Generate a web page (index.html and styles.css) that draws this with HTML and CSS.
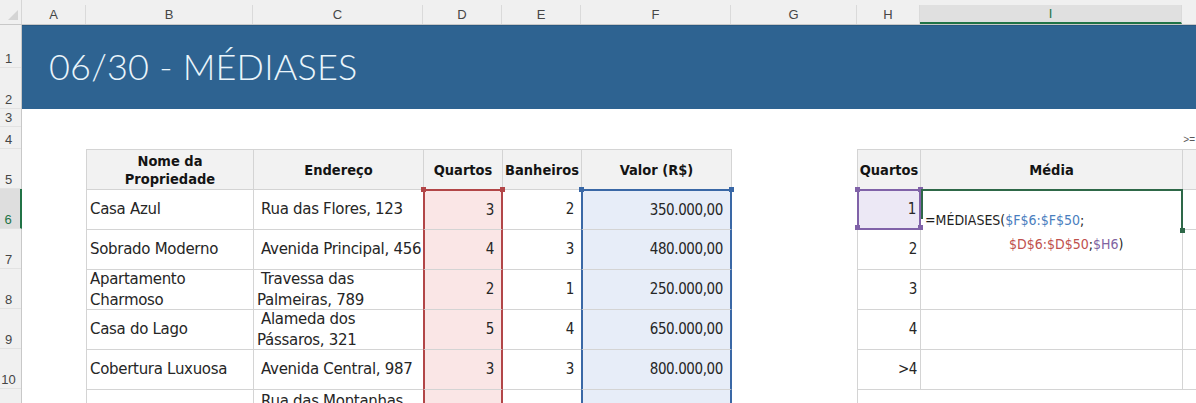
FILE: index.html
```html
<!DOCTYPE html>
<html lang="pt-BR">

<head>
  <meta charset="UTF-8">
  <meta name="viewport" content="width=device-width, initial-scale=1.0">
  <title>06/30 - MÉDIASES</title>
  <link rel="stylesheet" href="styles.css">
</head>

<body>
  <div class="sheet">
    <!-- column letters -->
    <div class="colBar">
      <div class="corner"><span class="cornerTri"></span></div>
      <div class="colHead">A</div>
      <div class="colHead">B</div>
      <div class="colHead">C</div>
      <div class="colHead">D</div>
      <div class="colHead">E</div>
      <div class="colHead">F</div>
      <div class="colHead">G</div>
      <div class="colHead">H</div>
      <div class="colHead colActive">I</div>
      <div class="colHead colLast"></div>
    </div>

    <div class="mainArea">
      <!-- row numbers -->
      <div class="rowBar">
        <div class="rowHead">1</div>
        <div class="rowHead">2</div>
        <div class="rowHead">3</div>
        <div class="rowHead">4</div>
        <div class="rowHead">5</div>
        <div class="rowHead rowActive">6</div>
        <div class="rowHead">7</div>
        <div class="rowHead">8</div>
        <div class="rowHead">9</div>
        <div class="rowHead">10</div>
        <div class="rowHead"></div>
      </div>

      <div class="canvas">
        <div class="banner">
          <h1 class="bannerTitle">06/30 - MÉDIASES</h1>
        </div>
        <div class="spacer"><span class="cutText">&gt;=</span></div>

        <div class="tables">
          <!-- B5:F11 -->
          <div class="grid props">
            <div class="cell head">Nome da<br>Propriedade</div>
            <div class="cell head">Endereço</div>
            <div class="cell head">Quartos</div>
            <div class="cell head">Banheiros</div>
            <div class="cell head">Valor (R$)</div>

            <div class="cell txt">Casa Azul</div>
            <div class="cell txt addr">Rua das Flores, 123</div>
            <div class="cell num selRed topSel">3</div>
            <div class="cell num">2</div>
            <div class="cell num selBlue topSel">350.000,00</div>

            <div class="cell txt">Sobrado Moderno</div>
            <div class="cell txt addr">Avenida Principal, 456</div>
            <div class="cell num selRed">4</div>
            <div class="cell num">3</div>
            <div class="cell num selBlue">480.000,00</div>

            <div class="cell txt">Apartamento<br>Charmoso</div>
            <div class="cell txt addr">Travessa das<br>Palmeiras, 789</div>
            <div class="cell num selRed">2</div>
            <div class="cell num">1</div>
            <div class="cell num selBlue">250.000,00</div>

            <div class="cell txt">Casa do Lago</div>
            <div class="cell txt addr">Alameda dos<br>Pássaros, 321</div>
            <div class="cell num selRed">5</div>
            <div class="cell num">4</div>
            <div class="cell num selBlue">650.000,00</div>

            <div class="cell txt">Cobertura Luxuosa</div>
            <div class="cell txt addr">Avenida Central, 987</div>
            <div class="cell num selRed">3</div>
            <div class="cell num">3</div>
            <div class="cell num selBlue">800.000,00</div>

            <div class="cell txt"></div>
            <div class="cell txt addr lastRow">Rua das Montanhas,</div>
            <div class="cell num selRed"></div>
            <div class="cell num"></div>
            <div class="cell num selBlue"></div>
          </div>

          <!-- H5:I10 -->
          <div class="grid lookup">
            <div class="cell head">Quartos</div>
            <div class="cell head">Média</div>
            <div class="cell head lastCol"></div>

            <div class="cell num selPurple">1</div>
            <div class="cell editing">
              <span class="formula">=MÉDIASES(<span class="refBlue">$F$6:$F$50</span>;<br><span class="line2"><span class="refRed">$D$6:$D$50</span>;<span class="refPurple">$H6</span>)</span></span>
            </div>
            <div class="cell lastCol"></div>

            <div class="cell num">2</div>
            <div class="cell"></div>
            <div class="cell lastCol"></div>

            <div class="cell num">3</div>
            <div class="cell"></div>
            <div class="cell lastCol"></div>

            <div class="cell num">4</div>
            <div class="cell"></div>
            <div class="cell lastCol"></div>

            <div class="cell num">&gt;4</div>
            <div class="cell"></div>
            <div class="cell lastCol"></div>
          </div>
        </div>
      </div>
    </div>
  </div>
</body>

</html>
```

FILE: styles.css
```css
html,
body {
  margin: 0;
  height: 403px;
  overflow: hidden;
  background-color: white;
}

body {
  font-family: "DejaVu Sans", sans-serif;
  font-size: 15px;
  color: rgb(38, 38, 38);
}

/* column letters */
.colBar {
  display: grid;
  grid-template-columns: 22px 64px 167px 170px 79px 79px 150px 126px 63px 262px 1fr;
  height: 25px;
  background-color: rgb(240, 240, 240);
  border-bottom: 1px solid rgb(200, 200, 200);
  box-sizing: border-box;
}

.corner {
  display: flex;
  align-items: flex-end;
  justify-content: flex-end;
  padding: 0 3px 4px 0;
  border-right: 1px solid rgb(214, 214, 214);
}

.cornerTri {
  width: 0;
  height: 0;
  border-left: 10px solid transparent;
  border-bottom: 10px solid rgb(212, 212, 212);
}

.colHead {
  display: flex;
  align-items: center;
  justify-content: center;
  margin-top: 5px;
  font-family: "Liberation Sans", Arial, sans-serif;
  font-size: 13px;
  color: rgb(70, 70, 70);
  border-right: 1px solid rgb(218, 218, 218);
}

.colActive {
  background-color: rgb(224, 224, 224);
  color: rgb(33, 115, 70);
  border-bottom: 2px solid rgb(33, 115, 70);
}

.colLast {
  border-right: none;
}

/* row numbers */
.mainArea {
  display: grid;
  grid-template-columns: 22px 1fr;
}

.rowBar {
  display: grid;
  grid-template-rows: 43px 41px 18px 22px repeat(7, 40px);
  background-color: rgb(240, 240, 240);
  border-right: 1px solid rgb(200, 200, 200);
}

.rowHead {
  display: flex;
  align-items: flex-end;
  justify-content: center;
  padding: 0 4px 1px 0;
  font-family: "Liberation Sans", Arial, sans-serif;
  font-size: 13px;
  color: rgb(70, 70, 70);
  border-bottom: 1px solid rgb(226, 226, 226);
}

.rowActive {
  background-color: rgb(222, 222, 222);
  color: rgb(33, 115, 70);
  border-right: 2px solid rgb(33, 115, 70);
  margin-right: -1px;
}

/* title band */
.banner {
  height: 84px;
  background-color: rgb(46, 99, 145);
  border-top: 1px solid rgb(40, 88, 130);
  box-sizing: border-box;
  display: flex;
  align-items: center;
  padding: 0 0 3px 27px;
}

.bannerTitle {
  margin: 0;
  font-family: Lato, sans-serif;
  font-weight: 300;
  font-size: 36px;
  letter-spacing: 0.2px;
  color: rgb(234, 245, 251);
}

.spacer {
  height: 40px;
  display: flex;
  justify-content: flex-end;
  align-items: flex-end;
}

.cutText {
  font-family: "Liberation Sans", Arial, sans-serif;
  font-size: 10px;
  color: rgb(90, 90, 90);
  margin: 0 1px 4px 0;
}

/* tables */
.tables {
  display: flex;
}

.grid {
  display: grid;
  grid-auto-rows: 40px;
  border-top: 1px solid rgb(212, 212, 212);
  border-left: 1px solid rgb(212, 212, 212);
}

.props {
  margin-left: 64px;
  grid-template-columns: 167px 170px 79px 79px 150px;
}

.lookup {
  margin-left: 125px;
  flex: 1;
  grid-template-columns: 63px 262px 1fr;
}

.cell {
  position: relative;
  display: flex;
  align-items: center;
  padding: 0 3px;
  border-right: 1px solid rgb(212, 212, 212);
  border-bottom: 1px solid rgb(212, 212, 212);
  white-space: nowrap;
  line-height: 21px;
}

.head {
  justify-content: center;
  text-align: center;
  background-color: rgb(242, 242, 242);
  font-family: "DejaVu Sans Condensed", "DejaVu Sans", sans-serif;
  font-stretch: condensed;
  font-weight: bold;
  font-size: 14.5px;
  line-height: 18px;
  color: rgb(20, 20, 20);
}

.txt {
  overflow: hidden;
  letter-spacing: -0.3px;
}

.addr {
  text-indent: 4px;
}

.lastRow {
  align-items: flex-start;
  padding-top: 1px;
}

.num {
  justify-content: flex-end;
  padding-right: 7px;
  font-family: "DejaVu Sans Condensed", "DejaVu Sans", sans-serif;
  font-stretch: condensed;
  letter-spacing: -0.4px;
}

.lookup .num {
  padding-right: 3px;
}

.lastCol {
  border-right: none;
}

/* range highlights from the formula */
.selRed {
  background-color: rgb(250, 230, 230);
  border-left: 2px solid rgb(178, 70, 72);
  border-right: 2px solid rgb(178, 70, 72);
  margin-left: -1px;
}

.selBlue {
  background-color: rgb(231, 237, 248);
  border-left: 2px solid rgb(58, 104, 166);
  border-right: 2px solid rgb(58, 104, 166);
  margin-left: -1px;
}

.selRed.topSel {
  border-top: 2px solid rgb(178, 70, 72);
  margin-top: -1px;
}

.selBlue.topSel {
  border-top: 2px solid rgb(58, 104, 166);
  margin-top: -1px;
}

.topSel::before,
.topSel::after {
  content: "";
  position: absolute;
  top: -4px;
  width: 5px;
  height: 5px;
}

.topSel::before {
  left: -4px;
}

.topSel::after {
  right: -4px;
}

.selRed.topSel::before,
.selRed.topSel::after {
  background-color: rgb(178, 70, 72);
}

.selBlue.topSel::before,
.selBlue.topSel::after {
  background-color: rgb(58, 104, 166);
}

.selPurple {
  background-color: rgb(236, 232, 245);
  border: 2px solid rgb(128, 98, 168);
  margin: -1px 0 0 -1px;
}

.selPurple::before,
.selPurple::after {
  content: "";
  position: absolute;
  top: -4px;
  width: 5px;
  height: 5px;
  background-color: rgb(128, 98, 168);
  box-shadow: 0 38px 0 rgb(128, 98, 168);
}

.selPurple::before {
  left: -4px;
}

.selPurple::after {
  right: -4px;
}

/* active cell in edit mode */
.editing {
  border-top: 2px solid rgb(46, 104, 72);
  border-right: 2px solid rgb(46, 104, 72);
  border-bottom: none;
  margin-top: -1px;
  z-index: 2;
}

.editing::before {
  content: "";
  position: absolute;
  left: 0;
  top: -2px;
  width: 2px;
  height: 30px;
  background-color: rgb(46, 104, 72);
}

.editing::after {
  content: "";
  position: absolute;
  right: -4px;
  bottom: -3px;
  width: 5px;
  height: 5px;
  background-color: rgb(46, 104, 72);
}

.formula {
  position: absolute;
  left: 4px;
  top: 17px;
  font-family: "DejaVu Sans Condensed", "DejaVu Sans", sans-serif;
  font-stretch: condensed;
  font-size: 14px;
  line-height: 24px;
  color: rgb(30, 30, 30);
}

.line2 {
  margin-left: 84px;
}

.refBlue {
  color: rgb(74, 126, 190);
}

.refRed {
  color: rgb(192, 80, 77);
}

.refPurple {
  color: rgb(128, 100, 162);
}
```
